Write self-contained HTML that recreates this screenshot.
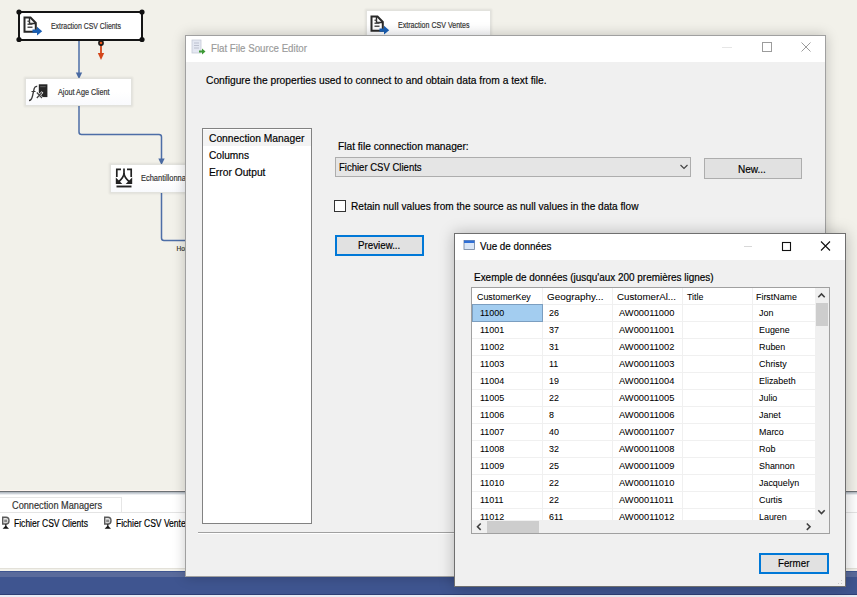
<!DOCTYPE html>
<html><head><meta charset="utf-8">
<style>
*{box-sizing:border-box}
html,body{margin:0;padding:0}
body{width:857px;height:597px;overflow:hidden;position:relative;background:#f2f1ea;font-family:"Liberation Sans",sans-serif}
.a{position:absolute}
.t{position:absolute;white-space:pre;line-height:1;transform-origin:0 0;font-family:"Liberation Sans",sans-serif;-webkit-text-stroke:0.18px currentColor}
.g .t{-webkit-text-stroke:0.05px currentColor}
svg{position:absolute;overflow:visible}
.node{position:absolute;background:linear-gradient(#fff 50%,#f9fafd);box-shadow:0 0 0 1px #e2e2dd,0 0 2px 2px rgba(0,0,0,0.07)}
.btn{position:absolute;background:#e1e1e1;border:1px solid #adadad}
</style></head><body>

<!-- ===== canvas ===== -->
<svg class="a" style="left:0;top:0" width="857" height="597">
  <g fill="none" stroke="#4d6ea7" stroke-width="1.5">
    <path d="M79 40 V75"/>
    <path d="M79 105 V132 Q79 134.5 81.5 134.5 H159 Q161.5 134.5 161.5 137 V161"/>
    <path d="M161.5 192 V238 Q161.5 240.5 164 240.5 H190"/>
  </g>
  <g fill="#4a6ba3">
    <path d="M75.8 72.5 L82.2 72.5 L79 79 Z"/>
    <path d="M158.3 158.5 L164.7 158.5 L161.5 165 Z"/>
  </g>
</svg>

<div class="node" style="left:26px;top:79px;width:105px;height:26px"></div>
<div class="node" style="left:111px;top:165px;width:90px;height:27px"></div>
<div class="node" style="left:367px;top:11px;width:123px;height:30px"></div>

<!-- selected node -->
<div class="a" style="left:18px;top:11px;width:125px;height:30px;background:#fff;border:2px solid #151515"></div>
<svg class="a" style="left:0;top:0" width="200" height="70">
  <g fill="#111"><circle cx="19" cy="12" r="2.6"/><circle cx="142" cy="12" r="2.6"/><circle cx="19" cy="39.5" r="2.6"/><circle cx="142" cy="39.5" r="2.6"/></g>
  <!-- doc icon -->
  <g fill="none" stroke="#2a2a2a" stroke-width="2">
    <path d="M24.5 17.5 H30.5 L35.8 23 V31.8 H24.5 Z"/>
    <path d="M29.5 17.5 V23.5 H35.8" stroke-width="1.4"/>
    <path d="M27.5 21.2 H29.5 M27.5 24.2 H32.5 M27.5 27.2 H32.5" stroke-width="1.4" stroke="#555"/>
  </g>
  <g fill="#1a5fb4"><path d="M32.5 29.6 H37 V26.8 L42.2 31.2 L37 35.6 V32.8 H32.5 Z"/></g>
  <!-- red connector -->
  <path d="M101 45 V55" stroke="#d4461a" stroke-width="1.8"/>
  <path d="M97.8 53 L104.2 53 L101 60 Z" fill="#d4461a"/>
  <circle cx="101" cy="43" r="2.9" fill="#1a1a1a"/>
  <circle cx="101" cy="43" r="1.3" fill="#e8561c"/>
</svg>
<!-- node2 icon fx -->
<svg class="a" style="left:0;top:0" width="200" height="200">
  <rect x="38.8" y="84.3" width="8.6" height="12.8" fill="#262626"/>
  <rect x="40.2" y="86" width="5.5" height="1.2" fill="#555"/>
  <path d="M36.5 92 L42.5 98.5 M42.5 92 L36.5 98.5" stroke="#fff" stroke-width="2.4"/>
  <path d="M36.8 92.5 L42 98 M42 92.5 L36.8 98" stroke="#444" stroke-width="1.2"/>
  <path d="M29 100.5 Q31.5 100.5 32.5 96 L34.2 88.5 Q35 86 37.2 86.5" fill="none" stroke="#3a3a3a" stroke-width="1.3"/>
  <path d="M31.5 91.5 H35.5" stroke="#3a3a3a" stroke-width="1"/>
  <!-- sampling icon -->
  <g fill="none" stroke="#222" stroke-width="1.7">
    <path d="M121 169.3 H116.8 V177"/>
    <path d="M127 169.3 H131.2 V177"/>
    <path d="M124 168.5 V173 Q124 177 118.5 182"/>
    <path d="M124 173 Q124 177 129.5 182"/>
    <path d="M116.5 186.5 H131.5" stroke-width="1.9"/>
  </g>
  <g fill="#222"><path d="M115.8 177.5 L115.8 184 L122.3 184 Z"/><path d="M132.2 177.5 L132.2 184 L125.7 184 Z"/></g>
</svg>
<!-- ventes node icon -->
<svg class="a" style="left:0;top:0" width="500" height="60">
  <g fill="none" stroke="#2a2a2a" stroke-width="2">
    <path d="M371.5 16.5 H377.5 L382.8 22 V30.8 H371.5 Z"/>
    <path d="M376.5 16.5 V22.5 H382.8" stroke-width="1.4"/>
    <path d="M374.5 20.2 H376.5 M374.5 23.2 H379.5 M374.5 26.2 H379.5" stroke-width="1.4" stroke="#555"/>
  </g>
  <g fill="#1a5fb4"><path d="M379.5 28.6 H384 V25.8 L389.2 30.2 L384 34.6 V31.8 H379.5 Z"/></g>
</svg>
<div class="t" style="left:50.60px;top:21.77px;font-size:8.3px;transform:scaleX(0.8341);color:#333">Extraction CSV Clients</div>
<div class="t" style="left:57.50px;top:88.17px;font-size:8.3px;transform:scaleX(0.8722);color:#333">Ajout Age Client</div>
<div class="t" style="left:397.50px;top:20.77px;font-size:8.3px;transform:scaleX(0.8518);color:#333">Extraction CSV Ventes</div>
<div class="t" style="left:141.40px;top:174.27px;font-size:8.3px;transform:scaleX(0.9000);color:#333">Echantillonnage</div>
<div class="t" style="left:176.50px;top:246.00px;font-size:6.5px;color:#333">Hors</div>

<!-- ===== bottom panel ===== -->
<div class="a" style="left:0;top:490px;width:857px;height:79px;background:linear-gradient(#fdf5ef 0,#fdf5ef 1px,#6d7175 1px,#6d7175 2px,#aab1b9 2px,#d8dde3 4px,#fff 5px)"></div>
<div class="a" style="left:-1px;top:497px;width:123px;height:16px;border:1px solid #e6e6e6;border-bottom:none;background:#fff"></div>
<div class="a" style="left:0;top:512px;width:857px;height:1px;background:#e4e4e4"></div>
<div class="a" style="left:0;top:568px;width:857px;height:1px;background:#e3e1d9"></div>
<div class="a" style="left:0;top:571px;width:857px;height:24px;background:#3f5590"></div>
<div class="a" style="left:0;top:572px;width:857px;height:5px;background:#5a6b9c"></div>
<div class="a" style="left:0;top:594px;width:857px;height:1px;background:#2d3f75"></div>
<div class="a" style="left:0;top:595px;width:857px;height:2px;background:#e8ecf5"></div>
<svg class="a" style="left:0;top:0" width="200" height="597">
  <g id="cmi">
    <path d="M2.7 517.3 H6 Q9 517.3 9 520.7 Q9 524 6 524 H2.7 Z" fill="#e6e6e6" stroke="#5a5a5a" stroke-width="1.4"/>
    <rect x="4.2" y="519.6" width="3" height="2.6" fill="#888"/>
    <path d="M5.8 524 V526.5" stroke="#222" stroke-width="1.2"/>
    <path d="M5.8 525.6 L2.6 528.8 H9 Z" fill="#111"/>
  </g>
  <use href="#cmi" x="102"/>
</svg>
<div class="t" style="left:11.50px;top:500.54px;font-size:10px;transform:scaleX(0.9198);color:#333">Connection Managers</div>
<div class="t" style="left:14.00px;top:519.03px;font-size:10px;transform:scaleX(0.8535);color:#000">Fichier CSV Clients</div>
<div class="t" style="left:116.00px;top:519.03px;font-size:10px;transform:scaleX(0.8533);color:#000">Fichier CSV Ventes</div>

<!-- ===== editor dialog ===== -->
<div class="a" style="left:185px;top:35px;width:641px;height:542px;background:#f0f0f0;border:1px solid #a0a0a0;box-shadow:0 0 12px rgba(0,0,0,0.22)"></div>
<div class="a" style="left:186px;top:36px;width:639px;height:26px;background:#fff"></div>
<svg class="a" style="left:0;top:0" width="857" height="597">
  <!-- title icon -->
  <g>
    <rect x="192" y="40" width="9" height="13" fill="#e4e8f2" stroke="#c5cad8" stroke-width="0.8"/>
    <path d="M194 43 H199 M194 45.5 H199 M194 48 H199" stroke="#b8bccb" stroke-width="0.9"/>
    <path d="M199 50.5 H202 V48.5 L205.5 51.5 L202 54.5 V52.5 H199 Z" fill="#3d9a35"/>
  </g>
  <!-- caption buttons -->
  <path d="M722 47.5 H732" stroke="#e6e6e6" stroke-width="1"/>
  <rect x="762.5" y="42.5" width="9" height="9" fill="none" stroke="#9c9c9c" stroke-width="1"/>
  <path d="M801.5 42.5 L810.5 51.5 M810.5 42.5 L801.5 51.5" stroke="#9c9c9c" stroke-width="1"/>
  <!-- separator -->
  <path d="M198 532.5 H826" stroke="#a0a0a0" stroke-width="1"/>
  <path d="M198 533.5 H826" stroke="#ffffff" stroke-width="1"/>
</svg>
<!-- listbox -->
<div class="a" style="left:202px;top:128px;width:110px;height:396px;background:#fff;border:1px solid #828282"></div>
<div class="a" style="left:203px;top:130px;width:108px;height:16px;background:#f3f3f3"></div>
<!-- combo -->
<div class="a" style="left:335px;top:157px;width:356px;height:20px;background:#e5e5e5;border:1px solid #adadad"></div>
<svg class="a" style="left:0;top:0" width="857" height="300">
  <path d="M680.5 165 L684 168.5 L687.5 165" fill="none" stroke="#444" stroke-width="1.2"/>
</svg>
<div class="btn" style="left:704px;top:158px;width:98px;height:21px"></div>
<div class="a" style="left:334px;top:200px;width:12px;height:12px;background:#fff;border:1px solid #333"></div>
<div class="btn" style="left:335px;top:235px;width:89px;height:21px;border:2px solid #0078d7"></div>
<div class="t" style="left:211.00px;top:42.99px;font-size:11px;transform:scaleX(0.8821);color:#9a9a9a">Flat File Source Editor</div>
<div class="t" style="left:205.70px;top:74.89px;font-size:11px;transform:scaleX(0.9330);color:#000">Configure the properties used to connect to and obtain data from a text file.</div>
<div class="t" style="left:208.70px;top:133.39px;font-size:11px;transform:scaleX(0.9332);color:#000">Connection Manager</div>
<div class="t" style="left:208.70px;top:150.39px;font-size:11px;transform:scaleX(0.9215);color:#000">Columns</div>
<div class="t" style="left:208.70px;top:167.39px;font-size:11px;transform:scaleX(0.9330);color:#000">Error Output</div>
<div class="t" style="left:337.60px;top:141.09px;font-size:11px;transform:scaleX(0.9253);color:#000">Flat file connection manager:</div>
<div class="t" style="left:338.70px;top:161.69px;font-size:11px;transform:scaleX(0.8662);color:#000">Fichier CSV Clients</div>
<div class="t" style="left:351.30px;top:201.49px;font-size:11px;transform:scaleX(0.9183);color:#000">Retain null values from the source as null values in the data flow</div>
<div class="t" style="left:738.40px;top:163.79px;font-size:11px;transform:scaleX(0.9124);color:#000">New...</div>
<div class="t" style="left:357.70px;top:239.69px;font-size:11px;transform:scaleX(0.8870);color:#000">Preview...</div>

<!-- ===== vue dialog ===== -->
<div class="a" style="left:454px;top:233px;width:392px;height:354px;background:#f0f0f0;border:1px solid #6f6f6f;box-shadow:0 0 14px rgba(0,0,0,0.25)"></div>
<div class="a" style="left:455px;top:234px;width:390px;height:26px;background:#fff"></div>
<svg class="a" style="left:0;top:0" width="857" height="597">
  <rect x="464" y="240.5" width="10.5" height="9" fill="#d9e6f7" stroke="#6d7f9a" stroke-width="0.8"/>
  <rect x="464" y="240.5" width="10.5" height="2.5" fill="#2f6fd6"/>
  <path d="M744 246.5 H752" stroke="#d8d8d8" stroke-width="1"/>
  <rect x="782.5" y="242.5" width="8" height="8" fill="none" stroke="#111" stroke-width="1.1"/>
  <path d="M821 241.5 L830 250.5 M830 241.5 L821 250.5" stroke="#111" stroke-width="1.1"/>
  <!-- grip -->
  <g fill="#c8c8c8"><rect x="841" y="583" width="1" height="1"/><rect x="838" y="583" width="1" height="1"/><rect x="841" y="580" width="1" height="1"/></g>
</svg>
<!-- grid -->
<div class="a g" style="left:471px;top:287px;width:359px;height:247px;background:#fff;border:1px solid #a0a0a0;overflow:hidden">
  <div class="a" style="left:0;top:0;width:343px;height:232px;overflow:hidden">
    <svg class="a" style="left:0;top:0" width="343" height="232">
      <g stroke="#f0f0f0" stroke-width="1">
        <path d="M70.5 0 V232 M140.5 0 V232 M210.5 0 V232 M280.5 0 V232"/>
        <path d="M0 16.5 H343 M0 33.5 H343 M0 50.5 H343 M0 67.5 H343 M0 84.5 H343 M0 101.5 H343 M0 118.5 H343 M0 135.5 H343 M0 152.5 H343 M0 169.5 H343 M0 186.5 H343 M0 203.5 H343 M0 220.5 H343"/>
      </g>
    </svg>
    <div class="a" style="left:0;top:16px;width:71px;height:18px;background:#a3cdf0;border:1px solid #7b9ec0"></div>
    <div class="t" style="left:5.00px;top:4.07px;font-size:9.6px;transform:scaleX(0.9250);color:#000">CustomerKey</div>
<div class="t" style="left:75.00px;top:4.07px;font-size:9.6px;transform:scaleX(1.0300);color:#000">Geography...</div>
<div class="t" style="left:145.00px;top:4.07px;font-size:9.6px;transform:scaleX(1.0150);color:#000">CustomerAl...</div>
<div class="t" style="left:215.00px;top:4.07px;font-size:9.6px;transform:scaleX(0.9250);color:#000">Title</div>
<div class="t" style="left:284.30px;top:4.07px;font-size:9.6px;transform:scaleX(0.9250);color:#000">FirstName</div>
<div class="t" style="left:7.70px;top:19.89px;font-size:9.7px;transform:scaleX(0.9200);color:#000">11000</div>
<div class="t" style="left:76.80px;top:19.89px;font-size:9.7px;transform:scaleX(0.9200);color:#000">26</div>
<div class="t" style="left:146.70px;top:19.89px;font-size:9.7px;transform:scaleX(0.9600);color:#000">AW00011000</div>
<div class="t" style="left:286.50px;top:19.89px;font-size:9.7px;transform:scaleX(0.9200);color:#000">Jon</div>
<div class="t" style="left:7.70px;top:36.89px;font-size:9.7px;transform:scaleX(0.9200);color:#000">11001</div>
<div class="t" style="left:76.80px;top:36.89px;font-size:9.7px;transform:scaleX(0.9200);color:#000">37</div>
<div class="t" style="left:146.70px;top:36.89px;font-size:9.7px;transform:scaleX(0.9600);color:#000">AW00011001</div>
<div class="t" style="left:286.50px;top:36.89px;font-size:9.7px;transform:scaleX(0.9200);color:#000">Eugene</div>
<div class="t" style="left:7.70px;top:53.89px;font-size:9.7px;transform:scaleX(0.9200);color:#000">11002</div>
<div class="t" style="left:76.80px;top:53.89px;font-size:9.7px;transform:scaleX(0.9200);color:#000">31</div>
<div class="t" style="left:146.70px;top:53.89px;font-size:9.7px;transform:scaleX(0.9600);color:#000">AW00011002</div>
<div class="t" style="left:286.50px;top:53.89px;font-size:9.7px;transform:scaleX(0.9200);color:#000">Ruben</div>
<div class="t" style="left:7.70px;top:70.89px;font-size:9.7px;transform:scaleX(0.9200);color:#000">11003</div>
<div class="t" style="left:76.80px;top:70.89px;font-size:9.7px;transform:scaleX(0.9200);color:#000">11</div>
<div class="t" style="left:146.70px;top:70.89px;font-size:9.7px;transform:scaleX(0.9600);color:#000">AW00011003</div>
<div class="t" style="left:286.50px;top:70.89px;font-size:9.7px;transform:scaleX(0.9200);color:#000">Christy</div>
<div class="t" style="left:7.70px;top:87.89px;font-size:9.7px;transform:scaleX(0.9200);color:#000">11004</div>
<div class="t" style="left:76.80px;top:87.89px;font-size:9.7px;transform:scaleX(0.9200);color:#000">19</div>
<div class="t" style="left:146.70px;top:87.89px;font-size:9.7px;transform:scaleX(0.9600);color:#000">AW00011004</div>
<div class="t" style="left:286.50px;top:87.89px;font-size:9.7px;transform:scaleX(0.9200);color:#000">Elizabeth</div>
<div class="t" style="left:7.70px;top:104.89px;font-size:9.7px;transform:scaleX(0.9200);color:#000">11005</div>
<div class="t" style="left:76.80px;top:104.89px;font-size:9.7px;transform:scaleX(0.9200);color:#000">22</div>
<div class="t" style="left:146.70px;top:104.89px;font-size:9.7px;transform:scaleX(0.9600);color:#000">AW00011005</div>
<div class="t" style="left:286.50px;top:104.89px;font-size:9.7px;transform:scaleX(0.9200);color:#000">Julio</div>
<div class="t" style="left:7.70px;top:121.89px;font-size:9.7px;transform:scaleX(0.9200);color:#000">11006</div>
<div class="t" style="left:76.80px;top:121.89px;font-size:9.7px;transform:scaleX(0.9200);color:#000">8</div>
<div class="t" style="left:146.70px;top:121.89px;font-size:9.7px;transform:scaleX(0.9600);color:#000">AW00011006</div>
<div class="t" style="left:286.50px;top:121.89px;font-size:9.7px;transform:scaleX(0.9200);color:#000">Janet</div>
<div class="t" style="left:7.70px;top:138.89px;font-size:9.7px;transform:scaleX(0.9200);color:#000">11007</div>
<div class="t" style="left:76.80px;top:138.89px;font-size:9.7px;transform:scaleX(0.9200);color:#000">40</div>
<div class="t" style="left:146.70px;top:138.89px;font-size:9.7px;transform:scaleX(0.9600);color:#000">AW00011007</div>
<div class="t" style="left:286.50px;top:138.89px;font-size:9.7px;transform:scaleX(0.9200);color:#000">Marco</div>
<div class="t" style="left:7.70px;top:155.89px;font-size:9.7px;transform:scaleX(0.9200);color:#000">11008</div>
<div class="t" style="left:76.80px;top:155.89px;font-size:9.7px;transform:scaleX(0.9200);color:#000">32</div>
<div class="t" style="left:146.70px;top:155.89px;font-size:9.7px;transform:scaleX(0.9600);color:#000">AW00011008</div>
<div class="t" style="left:286.50px;top:155.89px;font-size:9.7px;transform:scaleX(0.9200);color:#000">Rob</div>
<div class="t" style="left:7.70px;top:172.89px;font-size:9.7px;transform:scaleX(0.9200);color:#000">11009</div>
<div class="t" style="left:76.80px;top:172.89px;font-size:9.7px;transform:scaleX(0.9200);color:#000">25</div>
<div class="t" style="left:146.70px;top:172.89px;font-size:9.7px;transform:scaleX(0.9600);color:#000">AW00011009</div>
<div class="t" style="left:286.50px;top:172.89px;font-size:9.7px;transform:scaleX(0.9200);color:#000">Shannon</div>
<div class="t" style="left:7.70px;top:189.89px;font-size:9.7px;transform:scaleX(0.9200);color:#000">11010</div>
<div class="t" style="left:76.80px;top:189.89px;font-size:9.7px;transform:scaleX(0.9200);color:#000">22</div>
<div class="t" style="left:146.70px;top:189.89px;font-size:9.7px;transform:scaleX(0.9600);color:#000">AW00011010</div>
<div class="t" style="left:286.50px;top:189.89px;font-size:9.7px;transform:scaleX(0.9200);color:#000">Jacquelyn</div>
<div class="t" style="left:7.70px;top:206.89px;font-size:9.7px;transform:scaleX(0.9200);color:#000">11011</div>
<div class="t" style="left:76.80px;top:206.89px;font-size:9.7px;transform:scaleX(0.9200);color:#000">22</div>
<div class="t" style="left:146.70px;top:206.89px;font-size:9.7px;transform:scaleX(0.9600);color:#000">AW00011011</div>
<div class="t" style="left:286.50px;top:206.89px;font-size:9.7px;transform:scaleX(0.9200);color:#000">Curtis</div>
<div class="t" style="left:7.70px;top:223.89px;font-size:9.7px;transform:scaleX(0.9200);color:#000">11012</div>
<div class="t" style="left:76.80px;top:223.89px;font-size:9.7px;transform:scaleX(0.9200);color:#000">611</div>
<div class="t" style="left:146.70px;top:223.89px;font-size:9.7px;transform:scaleX(0.9600);color:#000">AW00011012</div>
<div class="t" style="left:286.50px;top:223.89px;font-size:9.7px;transform:scaleX(0.9200);color:#000">Lauren</div>
  </div>
  <!-- vertical scrollbar -->
  <div class="a" style="left:343px;top:0;width:14px;height:232px;background:#f0f0f0"></div>
  <div class="a" style="left:344px;top:15px;width:12px;height:23px;background:#cdcdcd"></div>
  <!-- horizontal scrollbar -->
  <div class="a" style="left:0;top:232px;width:357px;height:13px;background:#f0f0f0"></div>
  <div class="a" style="left:15px;top:233px;width:52px;height:12px;background:#cdcdcd"></div>
  <svg class="a" style="left:0;top:0" width="357" height="245">
    <g fill="none" stroke="#404040" stroke-width="1.6">
      <path d="M346.3 9.2 L349.5 6 L352.7 9.2"/>
      <path d="M346.3 222.3 L349.5 225.5 L352.7 222.3"/>
      <path d="M8.7 235.5 L5.5 238.7 L8.7 241.9"/>
      <path d="M334.8 235.5 L338 238.7 L334.8 241.9"/>
    </g>
  </svg>
</div>
<div class="btn" style="left:759px;top:553px;width:70px;height:21px;border:2px solid #0078d7"></div>
<div class="t" style="left:480.00px;top:240.69px;font-size:11px;transform:scaleX(0.8944);color:#000">Vue de données</div>
<div class="t" style="left:474.00px;top:273.47px;font-size:10.2px;transform:scaleX(0.9761);color:#000">Exemple de données (jusqu'aux 200 premières lignes)</div>
<div class="t" style="left:777.60px;top:557.69px;font-size:11px;transform:scaleX(0.8857);color:#000">Fermer</div>
</body></html>
